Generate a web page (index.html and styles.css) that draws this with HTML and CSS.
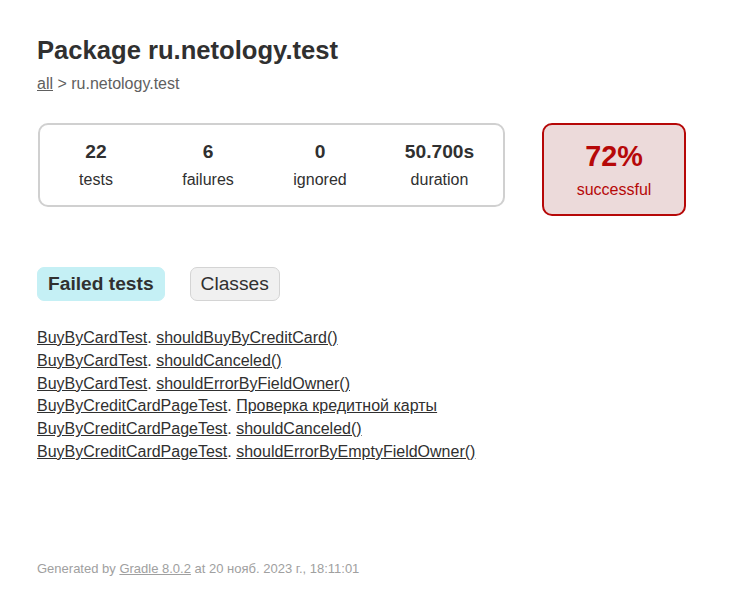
FILE: index.html
```html
<!DOCTYPE html>
<html lang="ru">
<head>
<meta charset="utf-8">
<title>Test results - Package ru.netology.test</title>
<link rel="stylesheet" href="styles.css">
</head>
<body>
<div class="content">
  <h1 class="title">Package ru.netology.test</h1>
  <div class="breadcrumbs"><a href="#">all</a> &gt; ru.netology.test</div>

  <div class="summary">
    <div class="summary-group">
      <div class="info-box">
        <div class="counter">22</div>
        <p class="label">tests</p>
      </div>
      <div class="info-box">
        <div class="counter">6</div>
        <p class="label">failures</p>
      </div>
      <div class="info-box">
        <div class="counter">0</div>
        <p class="label">ignored</p>
      </div>
      <div class="info-box info-box-wide">
        <div class="counter">50.700s</div>
        <p class="label">duration</p>
      </div>
    </div>
    <div class="info-box success-rate failures">
      <div class="percent">72%</div>
      <p class="label">successful</p>
    </div>
  </div>

  <ul class="tab-links">
    <li class="tab selected"><a href="#">Failed tests</a></li>
    <li class="tab"><a href="#">Classes</a></li>
  </ul>

  <ul class="link-list">
    <li><a href="#">BuyByCardTest</a>. <a href="#">shouldBuyByCreditCard()</a></li>
    <li><a href="#">BuyByCardTest</a>. <a href="#">shouldCanceled()</a></li>
    <li><a href="#">BuyByCardTest</a>. <a href="#">shouldErrorByFieldOwner()</a></li>
    <li><a href="#">BuyByCreditCardPageTest</a>. <a href="#">Проверка кредитной карты</a></li>
    <li><a href="#">BuyByCreditCardPageTest</a>. <a href="#">shouldCanceled()</a></li>
    <li><a href="#">BuyByCreditCardPageTest</a>. <a href="#">shouldErrorByEmptyFieldOwner()</a></li>
  </ul>

  <div class="footer">Generated by <a href="#">Gradle 8.0.2</a> at 20 нояб. 2023 г., 18:11:01</div>
</div>
</body>
</html>
```

FILE: styles.css
```css
html, body {
  margin: 0;
  padding: 0;
  background: #ffffff;
}

body {
  font-family: "Liberation Sans", Arial, sans-serif;
  font-size: 16px;
  color: #303030;
}

a, a:visited {
  color: #303030;
}

.content {
  padding: 19px 37px 30px 37px;
}

.title {
  font-size: 25.6px;
  font-weight: bold;
  margin: 17px 0 10px 0;
  white-space: nowrap;
}

.breadcrumbs, .breadcrumbs a {
  color: #606060;
}

.summary {
  display: flex;
  align-items: flex-start;
  margin: 29px 0 40px 0;
  padding: 1px;
}

.summary-group {
  display: flex;
  gap: 2px;
  padding: 1px;
  border: 2px solid #d0d0d0;
  border-radius: 10px;
}

.info-box {
  width: 110px;
  padding: 15px 0;
  text-align: center;
}

.info-box-wide {
  width: 125px;
}

.label {
  margin: 0;
}

.counter, .percent {
  font-size: 19.2px;
  font-weight: bold;
  margin-bottom: 8px;
}

.success-rate {
  width: 140px;
  margin-left: 37px;
  border: 2px solid #d0d0d0;
  border-radius: 10px;
}

.success-rate .percent {
  font-size: 28.8px;
}

.failures {
  color: #b60808;
}

.success-rate.failures {
  background-color: #ecdada;
  border-color: #b60808;
}

.tab-links {
  display: flex;
  gap: 25px;
  margin: 0;
  padding: 10px 0;
  list-style: none;
}

.tab {
  padding: 5px 10px;
  border: 1px solid #d4d4d4;
  border-radius: 7px;
  background-color: #f0f0f0;
}

.tab.selected {
  background-color: #c5f0f5;
  border-color: #c5f0f5;
}

.tab a {
  display: block;
  font-size: 19.2px;
  text-decoration: none;
}

.tab.selected a {
  font-weight: bold;
}

.link-list {
  margin: 18px 0 0 0;
  padding: 0;
  list-style: none;
}

.link-list li {
  line-height: 17.8px;
  margin-bottom: 5px;
  white-space: nowrap;
}

.footer {
  margin-top: 100px;
  font-size: 13px;
  white-space: nowrap;
}

.footer, .footer a {
  color: #a0a0a0;
}
```
